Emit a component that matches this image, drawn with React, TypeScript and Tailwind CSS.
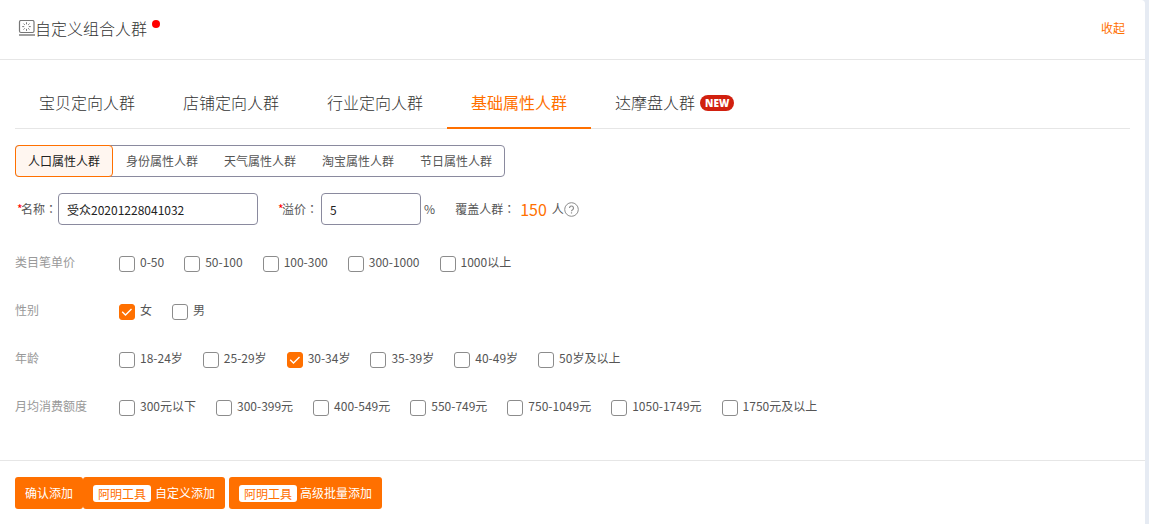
import { useState } from "react";
import clsx from "clsx";

const tabs = ["宝贝定向人群", "店铺定向人群", "行业定向人群", "基础属性人群", "达摩盘人群"];
const segments = ["人口属性人群", "身份属性人群", "天气属性人群", "淘宝属性人群", "节日属性人群"];

const groups = [
  { label: "类目笔单价", options: ["0-50", "50-100", "100-300", "300-1000", "1000以上"] },
  { label: "性别", options: ["女", "男"] },
  { label: "年龄", options: ["18-24岁", "25-29岁", "30-34岁", "35-39岁", "40-49岁", "50岁及以上"] },
  {
    label: "月均消费额度",
    options: ["300元以下", "300-399元", "400-549元", "550-749元", "750-1049元", "1050-1749元", "1750元及以上"],
  },
];

function PanelIcon() {
  return (
    <svg width="17" height="16" viewBox="0 0 17 16" fill="none" stroke="#777" aria-hidden="true">
      <rect x="1.5" y="0.5" width="14.5" height="12" rx="1.5" strokeWidth="1.2" />
      <path d="M1 15h16" strokeWidth="1.4" />
      <path d="M8.5 2.3v2M8.5 8.9v2M4.2 6.6h2M10.8 6.6h2M5.5 3.6l1.3 1.3M10.2 8.3l1.3 1.3M11.5 3.6l-1.3 1.3M6.8 8.3L5.5 9.6" />
    </svg>
  );
}

function HelpIcon() {
  return (
    <svg width="15" height="15" viewBox="0 0 15 15" fill="none" stroke="#8c8c8c" aria-hidden="true">
      <circle cx="7.5" cy="7.5" r="6.8" />
      <path d="M5.5 6a2 2 0 1 1 3.1 1.7c-.7.4-1.1.7-1.1 1.5" strokeWidth="1.2" />
      <path d="M7.5 10.3v1.2" strokeWidth="1.2" />
    </svg>
  );
}

function FieldLabel({ text, htmlFor }: { text: string; htmlFor: string }) {
  return (
    <label htmlFor={htmlFor} className="flex">
      <span className="w-1 text-[#f00]">*</span>
      {text}
      <span className="font-['Noto_Sans_CJK_TC',sans-serif]">：</span>
    </label>
  );
}

type OptionProps = { label: string; checked: boolean; onChange: () => void };

function Option({ label, checked, onChange }: OptionProps) {
  return (
    <label className="flex items-start gap-[5px]">
      <span className="relative mt-0.5 flex h-4 w-4">
        <input
          type="checkbox"
          checked={checked}
          onChange={onChange}
          className="h-4 w-4 appearance-none rounded-[3px] border border-[#8c8c8c] bg-white checked:border-[#ff7000] checked:bg-[#ff7000]"
        />
        {checked ? (
          <svg className="pointer-events-none absolute inset-0" width="16" height="16" viewBox="0 0 16 16" fill="none" stroke="#fff" strokeWidth="1.4">
            <path d="M3.2 7.8l3.3 3.3 6-6" />
          </svg>
        ) : null}
      </span>
      <span className="leading-4">{label}</span>
    </label>
  );
}

export default function App() {
  const [tab, setTab] = useState(tabs[3]);
  const [segment, setSegment] = useState(segments[0]);
  const [name, setName] = useState("受众20201228041032");
  const [premium, setPremium] = useState("5");
  const [checked, setChecked] = useState<string[]>(["女", "30-34岁"]);

  const toggle = (option: string) => {
    setChecked((prev) => (prev.includes(option) ? prev.filter((item) => item !== option) : [...prev, option]));
  };

  return (
    <div className="min-h-screen bg-[#e6ebf3] pr-1 font-['Noto_Sans_CJK_SC',sans-serif] text-xs text-[#555]">
      <main className="flex min-h-screen flex-col rounded-tr-sm bg-white">
        <header className="flex h-[60px] items-center justify-between border-b border-[#e6e6e6] pr-5 pb-1 pl-[18px]">
          <div className="flex items-center">
            <PanelIcon />
            <h1 className="text-base leading-6 font-light text-[#333]">自定义组合人群</h1>
            <span className="mb-2 ml-[5px] h-2 w-2 rounded-full bg-[#f00]" />
          </div>
          <a href="#" className="text-[#ff7000]">收起</a>
        </header>

        <section className="px-[15px] pt-[17px]">
          <nav className="flex border-b border-[#e6e6e6]">
            {tabs.map((item) => (
              <button
                key={item}
                type="button"
                onClick={() => setTab(item)}
                className={clsx(
                  "-mb-px flex h-[52px] items-center gap-[5px] border-b-2 px-6 text-base",
                  item === tab ? "border-[#ff7000] text-[#ff7000]" : "border-transparent font-light text-[#333]"
                )}
              >
                {item}
                {item === "达摩盘人群" ? (
                  <span className="mt-0.5 flex h-4 items-center rounded-full bg-[#d1200f] px-[5px] font-['Open_Sans',sans-serif] text-[10px] font-extrabold text-white">
                    NEW
                  </span>
                ) : null}
              </button>
            ))}
          </nav>

          <div className="mt-4 inline-flex h-8 rounded border border-[#8a8a9e]">
            {segments.map((item) => (
              <button
                key={item}
                type="button"
                onClick={() => setSegment(item)}
                className={clsx(
                  "-my-px w-[98px] border first:-ml-px last:-mr-px",
                  item === segment ? "rounded border-[#ff7000] bg-[#fff6f0] text-[#222]" : "border-transparent"
                )}
              >
                {item}
              </button>
            ))}
          </div>

          <div className="mt-4 flex items-center gap-5 pl-[2px]">
            <div className="flex items-center gap-px">
              <FieldLabel text="名称" htmlFor="name" />
              <input
                id="name"
                value={name}
                onChange={(event) => setName(event.target.value)}
                className="h-8 w-[200px] rounded border border-[#8a8a9e] px-2 text-[#222]"
              />
            </div>
            <div className="flex items-center gap-[3px]">
              <FieldLabel text="溢价" htmlFor="premium" />
              <input
                id="premium"
                value={premium}
                onChange={(event) => setPremium(event.target.value)}
                className="h-8 w-[100px] rounded border border-[#8a8a9e] px-2 text-[#222]"
              />
              <span>%</span>
            </div>
            <p className="flex items-center">
              覆盖人群
              <span className="font-['Noto_Sans_CJK_TC',sans-serif]">：</span>
              <span className="mx-[5px] text-base leading-6 text-[#ff7000]">150</span>
              人
              <HelpIcon />
            </p>
          </div>

          <div className="mt-[29px] flex flex-col gap-[30px]">
            {groups.map((group) => (
              <fieldset key={group.label} className="flex">
                <legend className="float-left w-[104px] leading-4 text-[#999]">{group.label}</legend>
                <div className="flex flex-wrap gap-x-5 gap-y-2">
                  {group.options.map((option) => (
                    <Option
                      key={option}
                      label={option}
                      checked={checked.includes(option)}
                      onChange={() => toggle(option)}
                    />
                  ))}
                </div>
              </fieldset>
            ))}
          </div>
        </section>

        <footer className="mt-11 flex border-t border-[#e6e6e6] px-[15px] py-4 text-white">
          <button type="button" className="h-8 rounded-[3px] bg-[#ff7000] px-[10px]">确认添加</button>
          <button type="button" className="flex h-8 items-center gap-1 rounded-[3px] bg-[#ff7000] px-[10px]">
            <span className="rounded-[3px] bg-white px-[5px] leading-[17px] text-[#ff7000]">阿明工具</span>
            自定义添加
          </button>
          <button type="button" className="ml-1 flex h-8 items-center gap-[3px] rounded-[3px] bg-[#ff7000] px-[10px]">
            <span className="rounded-[3px] bg-white px-[5px] leading-[17px] text-[#ff7000]">阿明工具</span>
            高级批量添加
          </button>
        </footer>
      </main>
    </div>
  );
}
